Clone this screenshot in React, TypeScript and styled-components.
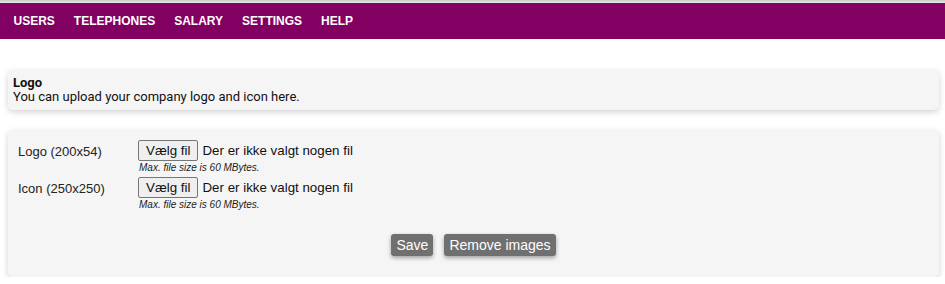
import React from 'react';
import styled, { createGlobalStyle } from 'styled-components';

const GlobalStyle = createGlobalStyle`
body {
  margin: 0;
  background: #fff;
  font-family: "Liberation Sans", Arial, sans-serif;
  color: #111;
}
`;

const TopEdge = styled.div`
height: 3px;
background: linear-gradient(#c8c8c8, #ececec);
`;

const NavBar = styled.nav`
height: 36px;
background-color: #830063;
display: flex;
align-items: center;
padding: 0 4px;
`;

const NavItem = styled.a`
color: #fff;
font-weight: bold;
font-size: 12px;
padding: 0 9.5px;
text-transform: uppercase;
cursor: pointer;
`;

const Panel = styled.section<{ $top: number }>`
margin: ${p => p.$top}px 6px 0 8px;
background: #f5f5f5;
border-radius: 5px;
box-shadow: 0 2px 6px rgba(0, 0, 0, 0.18);
`;

const InfoBody = styled.div`
padding: 6px 5px 6px 5px;
font-size: 13px;
line-height: 14px;
font-family: Roboto, "Liberation Sans", sans-serif;
`;

const InfoTitle = styled.div`
font-weight: bold;
`;

const FormBody = styled.div`
padding: 10px 10px 21px 10px;
`;

const Row = styled.div`
display: flex;
align-items: flex-start;
margin-bottom: 4px;
`;

const Label = styled.div`
width: 120px;
font-size: 13px;
padding-top: 4px;
color: #222;
`;

const Field = styled.div`
display: flex;
flex-direction: column;
`;

const FilePicker = styled.label`
display: flex;
align-items: center;
gap: 4px;
font-size: 13.33px;
color: #111;
`;

const PickButton = styled.span`
border: 1px solid #767676;
background: #efefef;
border-radius: 2px;
padding: 1px 7px;
height: 17px;
line-height: 17px;
font-size: 13.33px;
`;

const Hint = styled.div`
font-size: 10px;
font-style: italic;
color: #222;
margin: 1px 0 0 1px;
`;

const Actions = styled.div`
display: flex;
justify-content: center;
gap: 11px;
margin-top: 24px;
`;

const ActionButton = styled.button`
background: #707070;
color: #fff;
border: none;
border-radius: 3px;
font-family: "Liberation Sans", Arial, sans-serif;
font-size: 14px;
height: 22px;
padding: 0 5px;
box-shadow: 0 2px 4px rgba(0, 0, 0, 0.35);
cursor: pointer;
`;

const uploads = ['Logo (200x54)', 'Icon (250x250)'];

const App: React.FC = () => {
  return (
    <>
      <GlobalStyle />
      <TopEdge />
      <NavBar>
        <NavItem>Users</NavItem>
        <NavItem>Telephones</NavItem>
        <NavItem>Salary</NavItem>
        <NavItem>Settings</NavItem>
        <NavItem>Help</NavItem>
      </NavBar>
      <Panel $top={31}>
        <InfoBody>
          <InfoTitle>Logo</InfoTitle>
          You can upload your company logo and icon here.
        </InfoBody>
      </Panel>
      <Panel $top={20}>
        <FormBody>
          {uploads.map(u => (
            <Row key={u}>
              <Label>{u}</Label>
              <Field>
                <FilePicker>
                  <PickButton>Vælg fil</PickButton>
                  Der er ikke valgt nogen fil
                </FilePicker>
                <Hint>Max. file size is 60 MBytes.</Hint>
              </Field>
            </Row>
          ))}
          <Actions>
            <ActionButton>Save</ActionButton>
            <ActionButton>Remove images</ActionButton>
          </Actions>
        </FormBody>
      </Panel>
    </>
  );
};

export default App;
